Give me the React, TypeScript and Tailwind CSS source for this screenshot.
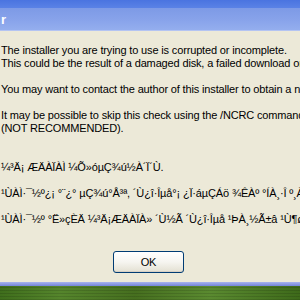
import { FC } from "react";

const bodyFont = { fontFamily: '"Liberation Sans", Arial, sans-serif' };

// lines of the installer message, null = empty line
const lines: (string | null)[] = [
    "The installer you are trying to use is corrupted or incomplete.",
    "This could be the result of a damaged disk, a failed download or a virus.",
    null,
    "You may want to contact the author of this installer to obtain a new copy.",
    null,
    "It may be possible to skip this check using the /NCRC command line switch",
    "(NOT RECOMMENDED).",
    null,
    null,
    "¼³Ä¡ ÆÄÀÏÀÌ ¼Õ»óµÇ¾ú½À´Ï´Ù.",
    null,
    "¹ÙÀÌ·¯½º¿¡ °¨¿° µÇ¾ú°Å³ª, ´Ù¿î·Îµå°¡ ¿Ï·áµÇÁö ¾ÊÀº °ÍÀ¸·Î º¸ÀÔ´Ï´Ù.",
    null,
    "¹ÙÀÌ·¯½º °Ë»çÈÄ ¼³Ä¡ÆÄÀÏÀ» ´Ù½Ã ´Ù¿î·Îµå ¹ÞÀ¸½Ã±â ¹Ù¶ø´Ï´Ù.",
];

const App: FC = () => {
    return (
        <div className="w-[300px] h-[300px] overflow-hidden flex flex-col bg-[#ece9d8]" style={bodyFont}>
            {/* window behind + title bar */}
            <div className="h-[8px] shrink-0 bg-gradient-to-b from-[#4a74e0] to-[#5a82e6]" />
            <div className="h-[23px] shrink-0 flex items-center bg-gradient-to-b from-[#7d9ae6] via-[#87a2ea] to-[#94aeee] border-b border-[#b4c4f2]">
                <span className="pl-[1px] text-[13px] font-bold text-white leading-none">r</span>
            </div>

            {/* message body */}
            <div className="flex-1 overflow-hidden pt-[13px] pl-[1px] text-[11px] leading-[13px] tracking-[-0.15px] text-black">
                {lines.map((line, i) =>
                    line === null ? (
                        <div key={i} className="h-[13px]" />
                    ) : (
                        <div key={i} className="whitespace-nowrap">
                            {line}
                        </div>
                    )
                )}

                <button className="mt-[25px] ml-[112px] w-[71px] h-[22px] rounded-[3px] border border-[#003c74] bg-gradient-to-b from-[#ffffff] via-[#f6f5f0] to-[#e3e0d2] text-[11px] text-black shadow-[inset_0_-1px_0_#d6d0c5]">
                    OK
                </button>
            </div>

            {/* window bottom frame + desktop */}
            <div className="h-[4px] shrink-0 bg-gradient-to-b from-[#a8b4ee] to-[#7484d8]" />
            <div className="h-[14px] shrink-0 bg-[linear-gradient(90deg,#3f6e1c,#55852c_20%,#466f1f_45%,#5a8a30_70%,#3e6a1a)]">
                <div className="h-full bg-[repeating-linear-gradient(0deg,rgba(0,0,0,0.12)_0px,rgba(0,0,0,0.12)_1px,transparent_1px,transparent_3px)]" />
            </div>
        </div>
    );
};

export default App;
